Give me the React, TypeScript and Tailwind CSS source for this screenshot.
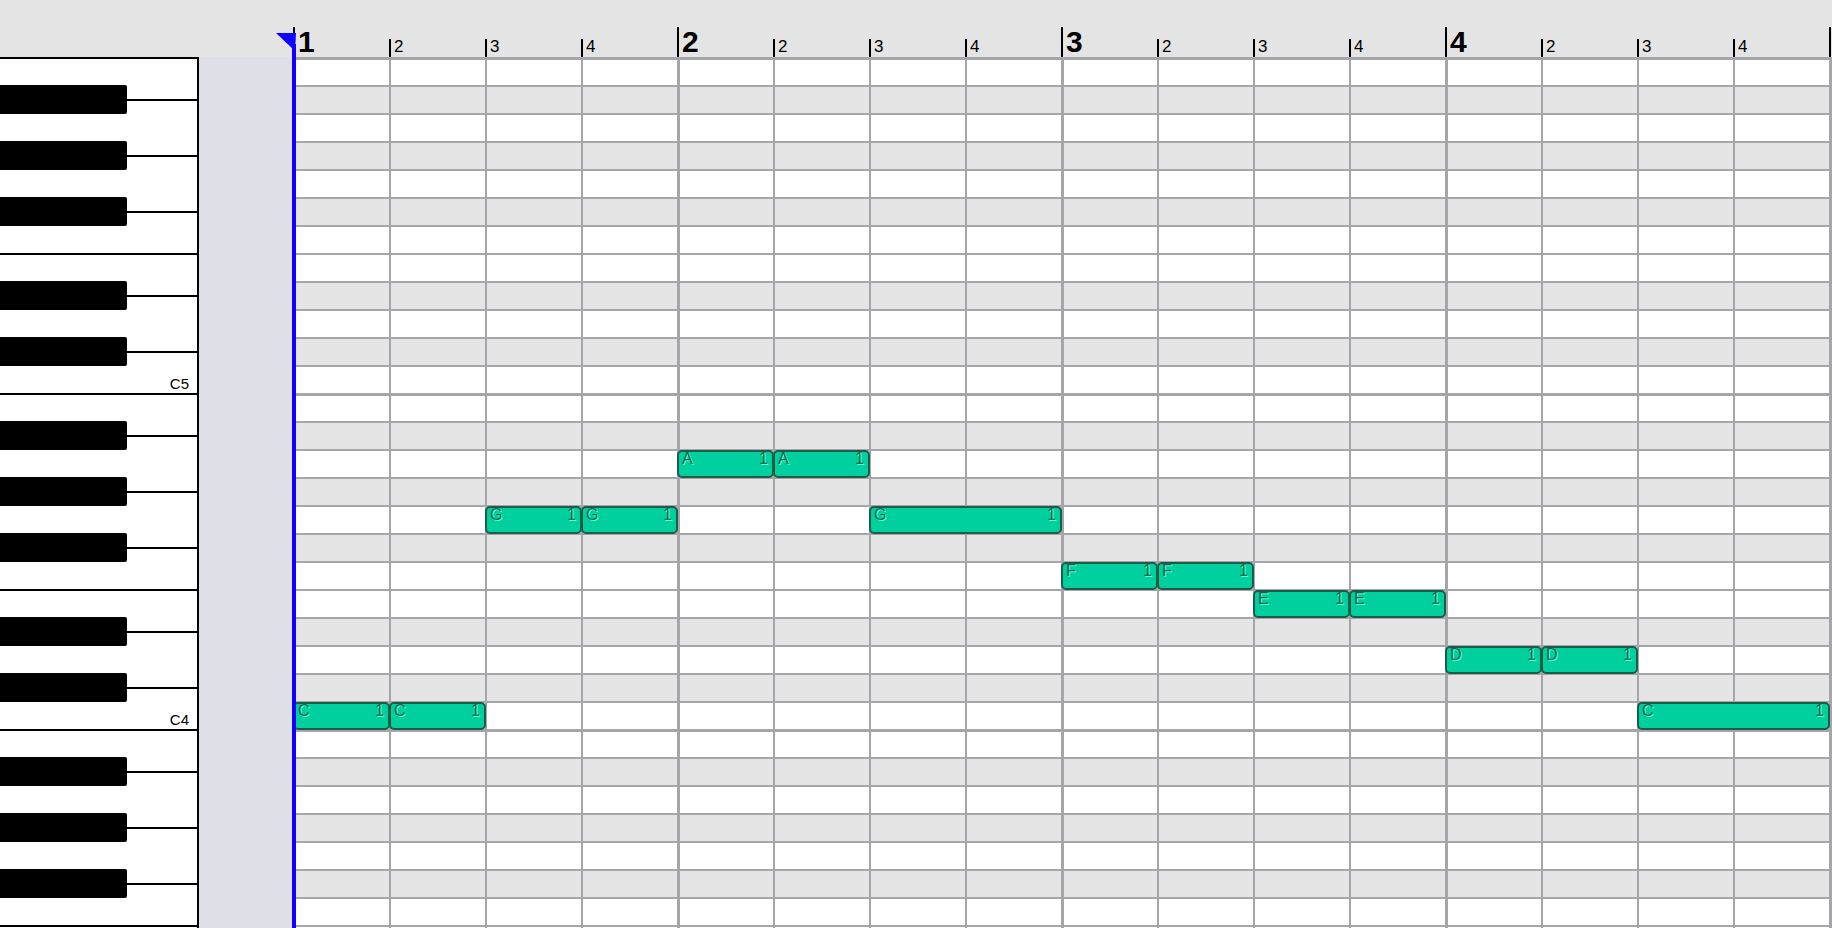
import clsx from 'clsx';

const ROW_H = 28;
const COL_W = 96;
const COLS = 16;

const OCTAVE = ['B', 'A#', 'A', 'G#', 'G', 'F#', 'F', 'E', 'D#', 'D', 'C#', 'C'];

// rows from top (B5) down to E3
const rows = [5, 4, 3]
  .flatMap((oct) => OCTAVE.map((name) => ({ name, oct })))
  .slice(0, 32);

const notes = [
  { label: 'C', row: 23, col: 0, len: 1 },
  { label: 'C', row: 23, col: 1, len: 1 },
  { label: 'G', row: 16, col: 2, len: 1 },
  { label: 'G', row: 16, col: 3, len: 1 },
  { label: 'A', row: 14, col: 4, len: 1 },
  { label: 'A', row: 14, col: 5, len: 1 },
  { label: 'G', row: 16, col: 6, len: 2 },
  { label: 'F', row: 18, col: 8, len: 1 },
  { label: 'F', row: 18, col: 9, len: 1 },
  { label: 'E', row: 19, col: 10, len: 1 },
  { label: 'E', row: 19, col: 11, len: 1 },
  { label: 'D', row: 21, col: 12, len: 1 },
  { label: 'D', row: 21, col: 13, len: 1 },
  { label: 'C', row: 23, col: 14, len: 2 },
];

function Ruler() {
  return (
    <div className="flex h-[57px] items-end">
      <div className="w-[293px] shrink-0" />
      {Array.from({ length: COLS + 1 }).map((_, k) => {
        const isBar = k % 4 === 0;
        return (
          <div key={k} className="flex w-[96px] shrink-0 items-end">
            <div className={clsx('w-[2px] shrink-0 bg-black', isBar ? 'h-[30px]' : 'h-[18px]')} />
            {k < COLS &&
              (isBar ? (
                <span className="ml-[3px] text-[30px] font-bold leading-none text-black">{k / 4 + 1}</span>
              ) : (
                <span className="mb-[2px] ml-[3px] text-[17px] leading-none text-black">{(k % 4) + 1}</span>
              ))}
          </div>
        );
      })}
    </div>
  );
}

function Piano() {
  return (
    <div className="w-[199px] shrink-0 border-r-2 border-black bg-white">
      {rows.map((r, i) => {
        const sharp = r.name.includes('#');
        return (
          <div
            key={i}
            className={clsx(
              'flex h-[28px] border-black',
              (r.name === 'B' || r.name === 'E') && 'border-t-2',
            )}
          >
            {sharp ? (
              <>
                <div className="h-[29px] w-[127px] shrink-0 rounded-r-[2px] bg-black" />
                <div className="flex-1">
                  <div className="mt-[14px] h-[2px] bg-black" />
                </div>
              </>
            ) : r.name === 'C' ? (
              <div className="flex flex-1 items-end justify-end pb-[2px] pr-[8px] text-[15px] leading-none text-black">
                C{r.oct}
              </div>
            ) : null}
          </div>
        );
      })}
    </div>
  );
}

function NoteGrid() {
  return (
    <div className="relative shrink-0">
      {rows.map((r, i) => (
        <div
          key={i}
          className={clsx(
            'flex h-[28px] border-[#a6a6aa]',
            r.name === 'B' ? 'border-t-[3px]' : 'border-t-2',
            r.name.includes('#') ? 'bg-[#e5e5e5]' : 'bg-white',
          )}
        >
          {Array.from({ length: COLS }).map((_, c) => (
            <div
              key={c}
              className={clsx('w-[96px] shrink-0 border-[#a6a6aa]', c % 4 === 0 ? 'border-l-[3px]' : 'border-l-2')}
            />
          ))}
          <div className="w-[3px] shrink-0 bg-[#a6a6aa]" />
        </div>
      ))}

      {notes.map((n, i) => (
        <div
          key={i}
          className="absolute flex h-[28px] justify-between rounded-[5px] border-2 border-[#1d5c48] bg-[#00d09e] pl-[3px] pr-[4px] text-[16px] leading-[13px] text-[#156650] [text-shadow:1px_1px_0_rgba(110,255,215,0.9)]"
          style={{ left: n.col * COL_W, top: n.row * ROW_H + 1, width: n.len * COL_W + 1 }}
        >
          <span>{n.label}</span>
          <span>1</span>
        </div>
      ))}
    </div>
  );
}

export default function App() {
  return (
    <div className="relative h-[928px] w-[1832px] overflow-hidden bg-[#e4e4e4] font-['Liberation_Sans',Arial,sans-serif]">
      <Ruler />
      <div className="flex">
        <Piano />
        <div className="w-[94px] shrink-0 bg-[#dfdfe7]" />
        <NoteGrid />
      </div>

      {/* playhead */}
      <div className="absolute bottom-0 left-[292px] top-[44px] w-[4px] bg-[#1000ff]" />
      <svg className="absolute left-[276px] top-[33px]" width="20" height="18" viewBox="0 0 20 18">
        <polygon points="0,0 20,0 19,18" fill="#1000ff" />
      </svg>
    </div>
  );
}
